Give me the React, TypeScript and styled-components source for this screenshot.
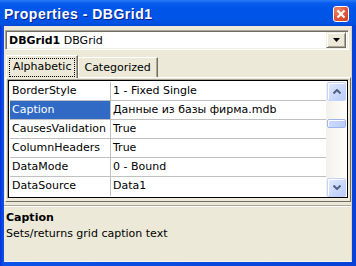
import React from 'react';
import styled, { createGlobalStyle } from 'styled-components';

const Global = createGlobalStyle`
  html, body { margin: 0; padding: 0; background: #ffffff; }
  body { font-family: "DejaVu Sans", sans-serif; font-size: 11px; }
`;

const Window = styled.div`
  width: 356px;
  height: 266px;
  box-sizing: border-box;
  display: flex;
  flex-direction: column;
  background: #0842d6;
`;

const TitleBar = styled.div`
  height: 26px;
  flex: none;
  display: flex;
  align-items: center;
  justify-content: space-between;
  padding: 0 7px 0 4px;
  background: linear-gradient(
    to bottom,
    #2a7cf7 0px,
    #0a5ced 3px,
    #0056e9 8px,
    #0055e8 18px,
    #0050e0 24px,
    #0046d2 26px
  );
`;

const Title = styled.div`
  font-family: "Liberation Sans", Arial, sans-serif;
  font-weight: bold;
  font-size: 14px;
  letter-spacing: 0.5px;
  color: #ffffff;
  text-shadow: 1px 1px #0a1d8a;
  line-height: 16px;
  padding-top: 1px;
`;

const CloseBtn = styled.div`
  width: 14px;
  height: 14px;
  box-sizing: content-box;
  border: 1px solid #ffffff;
  border-radius: 3px;
  background: radial-gradient(circle at 30% 25%, #f08a6c 0%, #e0553a 55%, #c8401f 100%);
  display: flex;
  align-items: center;
  justify-content: center;
  margin-top: 2px;
`;

const Frame = styled.div`
  flex: 1;
  display: flex;
  padding: 0 4px 4px 4px;
  background: linear-gradient(to right, #0831d9 0px, #0b47e0 2px, #0c52e8 4px, #0842d6 100%);
`;

const Body = styled.div`
  flex: 1;
  display: flex;
  flex-direction: column;
  background: #ece9d8;
  border-bottom: 1px solid #f6f5ee;
  border-right: 1px solid #d8d4c0;
`;

const Combo = styled.div`
  margin: 4px 2px 0 1px;
  height: 20px;
  box-sizing: border-box;
  display: flex;
  align-items: center;
  background: #ffffff;
  border-top: 1px solid #aca899;
  border-left: 1px solid #aca899;
  border-right: 1px solid #ffffff;
  border-bottom: 1px solid #ffffff;
  box-shadow: inset 1px 1px 0 #716f64, inset -1px -1px 0 #f1efe2;
  padding: 0 2px 0 3px;
`;

const ComboText = styled.div`
  flex: 1;
  font-size: 11px;
  color: #000;
  white-space: nowrap;
  b { font-weight: bold; }
`;

const DropBtn = styled.div`
  width: 20px;
  height: 16px;
  box-sizing: border-box;
  background: #ece9d8;
  border-top: 1px solid #f1efe2;
  border-left: 1px solid #f1efe2;
  border-right: 1px solid #716f64;
  border-bottom: 1px solid #716f64;
  box-shadow: inset 1px 1px 0 #ffffff, inset -1px -1px 0 #aca899;
  display: flex;
  align-items: center;
  justify-content: center;
`;

const TabStrip = styled.div`
  display: flex;
  align-items: flex-end;
  height: 22px;
  margin: 5px 0 0 2px;
  position: relative;
  z-index: 1;
`;

const Tab = styled.div<{ $active?: boolean }>`
  box-sizing: border-box;
  height: ${p => (p.$active ? 23 : 20)}px;
  margin-bottom: ${p => (p.$active ? -1 : 0)}px;
  padding: ${p => (p.$active ? '2px 2px 0 2px' : '3px 6px 0 5px')};
  background: #ece9d8;
  border-top: 1px solid #ffffff;
  border-left: 1px solid #ffffff;
  border-right: 1px solid #716f64;
  box-shadow: inset -1px 0 0 #aca899;
  font-size: 11px;
  color: #000;
  white-space: nowrap;
`;

const Focus = styled.div`
  border: 1px dotted #000;
  padding: 1px 3px 3px 3px;
  height: 19px;
  box-sizing: border-box;
`;

const TabPanel = styled.div`
  margin: 0 0 0 1px;
  height: 125px;
  box-sizing: border-box;
  border-top: 1px solid #ffffff;
  border-left: 1px solid #ffffff;
  border-right: 1px solid #716f64;
  border-bottom: 1px solid #716f64;
  padding: 1px 1px 2px 1px;
`;

const GridFrame = styled.div`
  height: 100%;
  box-sizing: border-box;
  border-top: 1px solid #aca899;
  border-left: 1px solid #aca899;
  border-right: 1px solid #f1efe2;
  border-bottom: 1px solid #f1efe2;
  display: flex;
`;

const GridInner = styled.div`
  flex: 1;
  display: flex;
  border: 1px solid #000;
  background: #ffffff;
  padding: 1px 0 0 1px;
`;

const Rows = styled.div`
  flex: 1;
  display: flex;
  flex-direction: column;
`;

const Row = styled.div`
  display: grid;
  grid-template-columns: 101px 1fr;
  height: 19px;
  box-sizing: border-box;
  border-bottom: 1px solid #c0c0c0;
  &:last-child { border-bottom: none; }
`;

const NameCell = styled.div<{ $sel?: boolean }>`
  border-right: 1px solid #c0c0c0;
  background: ${p => (p.$sel ? '#316ac5' : 'transparent')};
  color: ${p => (p.$sel ? '#ffffff' : '#000000')};
  padding-left: 2px;
  line-height: 18px;
  white-space: nowrap;
  overflow: hidden;
`;

const ValueCell = styled.div`
  padding-left: 2px;
  line-height: 18px;
  white-space: nowrap;
  overflow: hidden;
  color: #000;
`;

const ScrollBar = styled.div`
  width: 21px;
  display: flex;
  flex-direction: column;
  background: linear-gradient(to right, #f3f1ec, #fefefb);
  padding: 0 1px 0 1px;
  box-sizing: border-box;
`;

const ScrollBtn = styled.div`
  height: 19px;
  box-sizing: border-box;
  border: 1px solid #c3d3fd;
  border-radius: 2px;
  background: linear-gradient(to bottom right, #e2eafe, #b8cbf8);
  box-shadow: inset 1px 1px 0 #ffffff;
  display: flex;
  align-items: center;
  justify-content: center;
`;

const Track = styled.div`
  flex: 1;
  display: flex;
  flex-direction: column;
  padding-top: 18px;
`;

const Thumb = styled.div`
  height: 9px;
  box-sizing: border-box;
  border: 1px solid #9fb5e9;
  border-radius: 2px;
  background: linear-gradient(to right, #cfdcfd, #b9cbf7);
  box-shadow: inset 1px 1px 0 #ffffff;
`;

const Desc = styled.div`
  flex: 1;
  margin-top: 3px;
  border-top: 1px solid #aca899;
  box-shadow: inset 0 1px 0 #ffffff;
  padding: 4px 0 0 2px;
  color: #000;
`;

const DescTitle = styled.div`
  font-weight: bold;
  font-size: 11px;
  line-height: 16px;
`;

const DescText = styled.div`
  font-size: 11px;
  line-height: 15px;
`;

const rows: [string, string][] = [
  ['BorderStyle', '1 - Fixed Single'],
  ['Caption', 'Данные из базы фирма.mdb'],
  ['CausesValidation', 'True'],
  ['ColumnHeaders', 'True'],
  ['DataMode', '0 - Bound'],
  ['DataSource', 'Data1'],
];

const Chevron = ({ up }: { up?: boolean }) => (
  <svg width="8" height="5" viewBox="0 0 8 5">
    <polyline
      points={up ? '0.5,4.5 4,1 7.5,4.5' : '0.5,0.5 4,4 7.5,0.5'}
      fill="none"
      stroke="#4d6185"
      strokeWidth="2"
    />
  </svg>
);

export default function App() {
  return (
    <>
      <Global />
      <Window>
        <TitleBar>
          <Title>Properties - DBGrid1</Title>
          <CloseBtn>
            <svg width="10" height="10" viewBox="0 0 10 10">
              <path d="M1.5 1.5 L8.5 8.5 M8.5 1.5 L1.5 8.5" stroke="#fff" strokeWidth="2" />
            </svg>
          </CloseBtn>
        </TitleBar>
        <Frame>
          <Body>
            <Combo>
              <ComboText>
                <b>DBGrid1</b> DBGrid
              </ComboText>
              <DropBtn>
                <svg width="7" height="4" viewBox="0 0 7 4">
                  <path d="M0 0 H7 L3.5 4 Z" fill="#000" />
                </svg>
              </DropBtn>
            </Combo>
            <TabStrip>
              <Tab $active>
                <Focus>Alphabetic</Focus>
              </Tab>
              <Tab>Categorized</Tab>
            </TabStrip>
            <TabPanel>
              <GridFrame>
                <GridInner>
                  <Rows>
                    {rows.map(([n, v]) => (
                      <Row key={n}>
                        <NameCell $sel={n === 'Caption'}>{n}</NameCell>
                        <ValueCell>{v}</ValueCell>
                      </Row>
                    ))}
                  </Rows>
                  <ScrollBar>
                    <ScrollBtn>
                      <Chevron up />
                    </ScrollBtn>
                    <Track>
                      <Thumb />
                    </Track>
                    <ScrollBtn>
                      <Chevron />
                    </ScrollBtn>
                  </ScrollBar>
                </GridInner>
              </GridFrame>
            </TabPanel>
            <Desc>
              <DescTitle>Caption</DescTitle>
              <DescText>Sets/returns grid caption text</DescText>
            </Desc>
          </Body>
        </Frame>
      </Window>
    </>
  );
}
